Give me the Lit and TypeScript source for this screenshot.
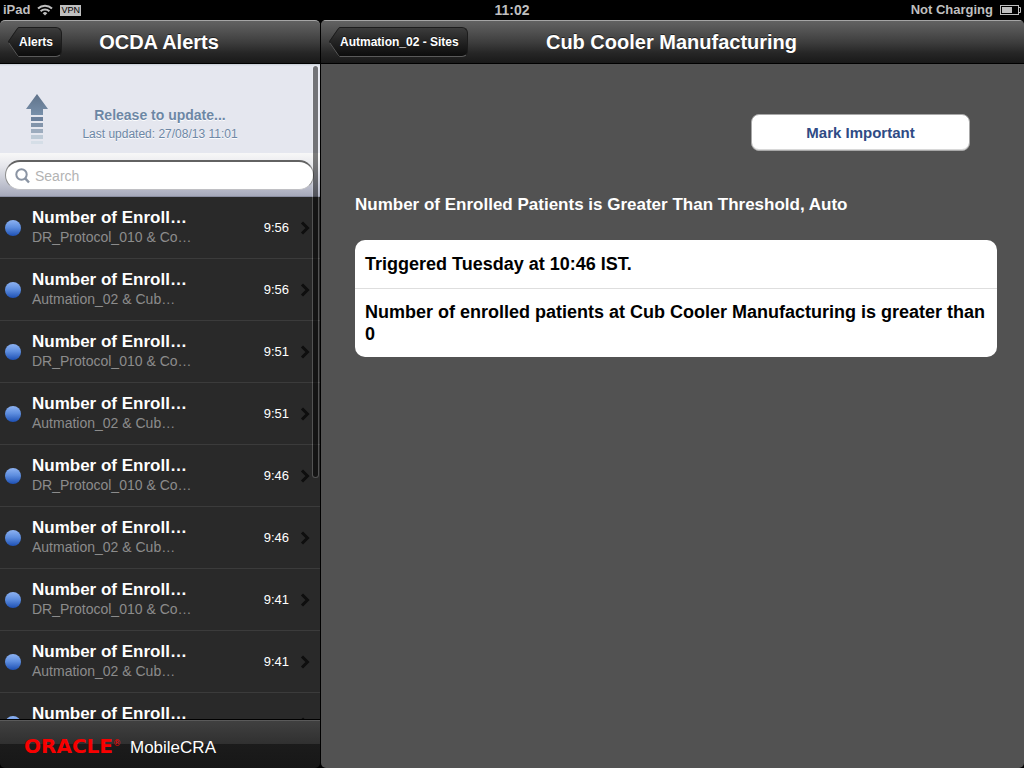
import { LitElement, html, css } from "lit";
import { customElement, property, state } from "lit/decorators.js";

interface AlertItem {
  title: string;
  detail: string;
  time: string;
}

const PROTOCOL = "DR_Protocol_010 & Co…";
const AUTOMATION = "Autmation_02 & Cub…";

const ALERTS: AlertItem[] = ["9:56", "9:56", "9:51", "9:51", "9:46", "9:46", "9:41", "9:41", "9:36"].map(
  (time, i) => ({ title: "Number of Enroll…", detail: i % 2 ? AUTOMATION : PROTOCOL, time })
);

@customElement("status-bar")
class StatusBar extends LitElement {
  static styles = css`
    :host {
      display: grid;
      grid-template-columns: 1fr auto 1fr;
      align-items: center;
      height: 20px;
      padding: 0 3px;
      box-sizing: border-box;
      background: #000;
      color: #bfbfbf;
      font-size: 13px;
      line-height: 18px;
      font-weight: bold;
    }
    .left, .right { display: flex; align-items: center; }
    .left { gap: 7px; }
    .right { justify-content: flex-end; gap: 7px; }
    .clock { font-size: 14px; }
    .vpn {
      padding: 0 1px;
      background: #bfbfbf;
      color: #000;
      font-size: 9px;
      line-height: 11px;
      font-weight: normal;
    }
  `;
  render() {
    return html`
      <div class="left">
        <span>iPad</span>
        <svg width="16" height="12" viewBox="0 0 16 12" fill="none" stroke="#bfbfbf" stroke-width="2" aria-label="Wi-Fi">
          <path d="M1 4.6 A10.2 10.2 0 0 1 15 4.6" />
          <path d="M3.6 7.3 A6.4 6.4 0 0 1 12.4 7.3" />
          <path d="M8 11.5 L5.7 9.2 A3.3 3.3 0 0 1 10.3 9.2 Z" fill="#bfbfbf" stroke="none" />
        </svg>
        <span class="vpn">VPN</span>
      </div>
      <span class="clock">11:02</span>
      <div class="right">
        <span>Not Charging</span>
        <svg width="21" height="10" viewBox="0 0 21 10" aria-label="Battery">
          <rect x="0.5" y="0.5" width="18" height="9" fill="none" stroke="#bfbfbf" />
          <rect x="2" y="2" width="10" height="6" fill="#bfbfbf" />
          <path d="M19 2.5 H20.5 V7.5 H19" fill="none" stroke="#bfbfbf" />
        </svg>
      </div>
    `;
  }
}

@customElement("nav-header")
class NavHeader extends LitElement {
  @property() back = "";
  @property() heading = "";
  static styles = css`
    :host {
      display: grid;
      grid-template-columns: 1fr auto 1fr;
      align-items: center;
      flex: none;
      height: 44px;
      padding: 0 10px 0 8px;
      box-sizing: border-box;
      border-top: 1px solid #a5a5a5;
      border-bottom: 1px solid #000;
      border-radius: 5px 5px 0 0;
      background: linear-gradient(#626262, #505050 11px, #3c3c3c 22px, #262626 32px, #191919);
      color: #fff;
    }
    .heading {
      margin: 0;
      font-size: 20px;
      line-height: 24px;
      font-weight: bold;
      text-shadow: 0 -1px 0 rgba(0, 0, 0, 0.5);
    }
    .back {
      display: flex;
      justify-self: start;
      height: 30px;
      padding: 0;
      border: 0;
      background: none;
      color: #fff;
      font: bold 12px/26px "Liberation Sans", Arial, sans-serif;
      text-shadow: 0 -1px 0 rgba(0, 0, 0, 0.5);
      white-space: nowrap;
      cursor: pointer;
    }
    .tip { display: block; flex: none; }
    .label {
      box-sizing: border-box;
      height: 30px;
      padding: 1px 8px 0 0;
      border: 1px solid #1c1c1c;
      border-left: 0;
      border-bottom-color: #5a5a5a;
      border-radius: 0 6px 6px 0;
      background: linear-gradient(#3c3c3c, #232323 50%, #0c0c0c);
    }
  `;
  render() {
    return html`
      <button class="back">
        <svg class="tip" width="11" height="30" viewBox="0 0 11 30">
          <defs>
            <linearGradient id="g" x1="0" y1="0" x2="0" y2="1">
              <stop offset="0" stop-color="#3c3c3c" />
              <stop offset="0.5" stop-color="#232323" />
              <stop offset="1" stop-color="#0c0c0c" />
            </linearGradient>
          </defs>
          <path d="M11 0 C10 0 9.500 0.500 8.500 2 L0.500 14 Q0 15 0.500 16 L8.500 28 C9.500 29.500 10 30 11 30 Z" fill="url(#g)" />
          <path d="M11 0.500 C10.300 0.500 9.800 1 9 2.200 L0.800 14 Q0.400 15 0.800 15.800" fill="none" stroke="#1c1c1c" />
          <path d="M0.800 15.800 L9 27.800 C9.800 29 10.300 29.500 11 29.500" fill="none" stroke="#5a5a5a" />
        </svg>
        <span class="label">${this.back}</span>
      </button>
      <h1 class="heading">${this.heading}</h1>
      <span></span>
    `;
  }
}

@customElement("alert-list")
class AlertList extends LitElement {
  @state() private query = "";
  static styles = css`
    :host {
      position: relative;
      display: block;
      flex: 1;
      min-height: 0;
      overflow: hidden;
      background: #292929;
    }
    .pull {
      display: grid;
      align-content: end;
      justify-items: center;
      position: relative;
      height: 89px;
      padding-bottom: 10px;
      box-sizing: border-box;
      background: linear-gradient(#c5ccd4, #e5e7ef 2px);
      color: #6d87a5;
      text-shadow: 0 1px 0 rgba(255, 255, 255, 0.9);
    }
    .release { font-size: 14px; line-height: 20px; font-weight: bold; }
    .updated { font-size: 12px; line-height: 18px; }
    .arrow { position: absolute; left: 26px; bottom: 8px; }
    .search {
      display: block;
      padding: 7px 6px 7px 5px;
      box-sizing: border-box;
      height: 44px;
      border-bottom: 1px solid #8b8fa2;
      background: linear-gradient(#f8f8f8, #e6e7ec 30%, #b0b3c3 90%, #a6a9ba);
    }
    .field {
      display: flex;
      align-items: center;
      gap: 5px;
      height: 30px;
      padding: 0 10px 0 9px;
      box-sizing: border-box;
      border: 1px solid #8c8c8c;
      border-top: 2px solid #626262;
      border-bottom-color: #c0c0c4;
      border-radius: 15px;
      background: #fff;
    }
    .input {
      flex: 1;
      min-width: 0;
      padding: 0;
      border: 0;
      outline: 0;
      background: none;
      color: #222;
      font: 14px/20px "Liberation Sans", Arial, sans-serif;
    }
    .input::placeholder { color: #b3b3b3; opacity: 1; }
    .rows { margin: 0; padding: 0; list-style: none; }
    .row {
      display: grid;
      grid-template-columns: 16px minmax(0, 1fr) auto 10px;
      align-items: center;
      column-gap: 11px;
      width: 100%;
      height: 62px;
      padding: 0 10px 0 5px;
      box-sizing: border-box;
      border: 0;
      border-bottom: 1px solid #3b3b3b;
      background: none;
      color: #fff;
      font: 13px/20px "Liberation Sans", Arial, sans-serif;
      text-align: left;
      cursor: pointer;
    }
    .dot {
      width: 16px;
      height: 16px;
      border-radius: 50%;
      background: linear-gradient(#8db2f2, #5f8fe0 45%, #1d50b4);
    }
    .text { display: grid; }
    .title { font-size: 17px; line-height: 20px; font-weight: bold; }
    .detail { color: #8c8c8c; font-size: 14px; line-height: 18px; padding-bottom: 2px; }
    .bar {
      position: absolute;
      top: 1px;
      right: 1px;
      width: 7px;
      height: 63%;
      box-sizing: border-box;
      border: 1px solid rgba(255, 255, 255, 0.2);
      border-radius: 4px;
      background: rgba(0, 0, 0, 0.5);
      background-clip: padding-box;
    }
  `;
  render() {
    return html`
      <div class="pull">
        <svg class="arrow" width="22" height="52" viewBox="0 0 22 52" aria-hidden="true">
          <defs>
            <linearGradient id="a" x1="0" y1="0" x2="0" y2="1">
              <stop offset="0" stop-color="#5f728a" />
              <stop offset="1" stop-color="#7890aa" />
            </linearGradient>
          </defs>
          <path d="M11 1 L22 16 H17 V22 H5 V16 H0 Z" fill="url(#a)" />
          <rect x="5" y="24" width="12" height="4" fill="#6c819c" />
          <rect x="5" y="30" width="12" height="4" fill="#8294aa" />
          <rect x="5" y="36" width="12" height="4" fill="#9dacbe" />
          <rect x="5" y="42" width="12" height="4" fill="#bdcad6" />
          <rect x="5" y="48" width="12" height="3" fill="#d5dee7" />
        </svg>
        <span class="release">Release to update...</span>
        <span class="updated">Last updated: 27/08/13 11:01</span>
      </div>
      <div class="search">
        <label class="field">
          <svg width="15" height="16" viewBox="0 0 15 16" fill="none" stroke="#8a94a3" aria-hidden="true">
            <circle cx="6.500" cy="6.500" r="5.200" stroke-width="2" />
            <path d="M10.200 10.400 L14 14.500" stroke-width="2.400" />
          </svg>
          <input
            class="input"
            type="text"
            aria-label="Search"
            placeholder="Search"
            .value=${this.query}
            @input=${(e: Event) => (this.query = (e.target as HTMLInputElement).value)}
          />
        </label>
      </div>
      <ul class="rows">
        ${ALERTS.map(
          (a) => html`
            <li>
              <button class="row">
                <span class="dot"></span>
                <span class="text"><span class="title">${a.title}</span><span class="detail">${a.detail}</span></span>
                <span class="time">${a.time}</span>
                <svg width="10" height="14" viewBox="0 0 10 14" aria-hidden="true">
                  <path d="M2 1.500 L7.500 7 L2 12.500" fill="none" stroke="#0e0e0e" stroke-width="3" />
                </svg>
              </button>
            </li>
          `
        )}
      </ul>
      <div class="bar"></div>
    `;
  }
}

@customElement("app-root")
class AppRoot extends LitElement {
  static styles = css`
    :host {
      display: flex;
      flex-direction: column;
      height: 100vh;
      background: #000;
      font-family: "Liberation Sans", Arial, sans-serif;
    }
    .split {
      display: grid;
      grid-template-columns: 320px minmax(0, 1fr);
      column-gap: 1px;
      flex: 1;
      min-height: 0;
    }
    .pane { display: flex; flex-direction: column; min-width: 0; min-height: 0; }
    .main { background: #525252; border-radius: 5px; overflow: hidden; }
    .main nav-header { border-radius: 0; }
    .foot {
      display: flex;
      align-items: baseline;
      flex: none;
      height: 49px;
      padding: 16px 24px 0;
      box-sizing: border-box;
      border-top: 1px solid #000;
      border-radius: 0 0 5px 5px;
      background: linear-gradient(#5a5a5a 0 1px, #404040 1px, #303030 24px, #1b1b1b 24px, #171717);
      color: #fff;
      font-size: 17px;
      line-height: 20px;
    }
    .logo {
      flex: none;
      width: 106px;
      color: #f80000;
      font-family: "DejaVu Sans", sans-serif;
      font-size: 20px;
      font-weight: bold;
    }
    .reg { font-size: 8px; line-height: 8px; vertical-align: 7px; font-weight: normal; }
    .content { padding: 50px 27px 0 34px; display: grid; }
    .mark {
      justify-self: end;
      width: 219px;
      height: 37px;
      margin-right: 27px;
      border: 1px solid #a8a8a8;
      border-radius: 8px;
      background: #fff;
      box-shadow: inset 0 -1px 0 #d8d8d8;
      color: #2f4b85;
      font: bold 15px/20px "Liberation Sans", Arial, sans-serif;
      cursor: pointer;
    }
    .subject {
      margin: 43px 0 24px;
      color: #fff;
      font-size: 17px;
      line-height: 22px;
      font-weight: bold;
    }
    .card {
      border-radius: 10px;
      background: #fff;
      color: #000;
      font-size: 18px;
      line-height: 22px;
      font-weight: bold;
    }
    .line { margin: 0; padding: 13px 10px; }
    .line + .line { padding: 12px 10px; border-top: 1px solid #dedede; }
  `;
  render() {
    return html`
      <status-bar></status-bar>
      <div class="split">
        <aside class="pane">
          <nav-header back="Alerts" heading="OCDA Alerts"></nav-header>
          <alert-list></alert-list>
          <footer class="foot">
            <span class="logo">ORACLE<span class="reg">®</span></span>
            <span>MobileCRA</span>
          </footer>
        </aside>
        <main class="pane main">
          <nav-header back="Autmation_02 - Sites" heading="Cub Cooler Manufacturing"></nav-header>
          <div class="content">
            <button class="mark">Mark Important</button>
            <h2 class="subject">Number of Enrolled Patients is Greater Than Threshold, Auto</h2>
            <section class="card">
              <p class="line">Triggered Tuesday at 10:46 IST.</p>
              <p class="line">Number of enrolled patients at Cub Cooler Manufacturing is greater than 0</p>
            </section>
          </div>
        </main>
      </div>
    `;
  }
}
